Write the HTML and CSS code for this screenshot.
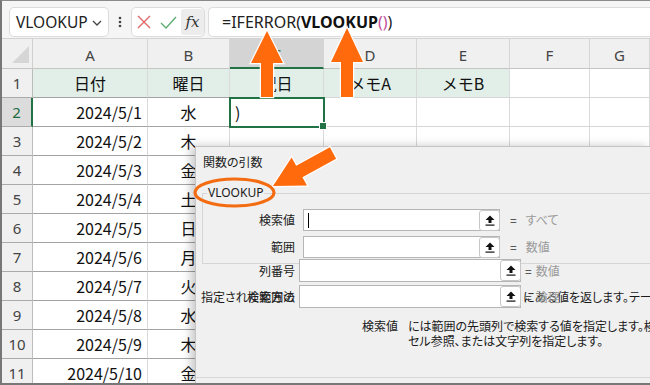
FILE: index.html
```html
<!DOCTYPE html>
<html lang="ja">
<head>
<meta charset="utf-8">
<title>VLOOKUP</title>
<link rel="stylesheet" href="styles.css">
</head>
<body>
<div class="app">
  <div class="toolbar">
    <div class="namebox"><span>VLOOKUP</span>
      <svg class="chev" width="10" height="6" viewBox="0 0 10 6"><path d="M1 1 L5 5 L9 1" fill="none" stroke="#444" stroke-width="1.3"/></svg>
    </div>
    <div class="dots"><svg width="4" height="12" viewBox="0 0 4 12"><circle cx="2" cy="2" r="1.3" fill="#444"/><circle cx="2" cy="6" r="1.3" fill="#444"/><circle cx="2" cy="10" r="1.3" fill="#444"/></svg></div>
    <div class="edit">
      <svg class="ico-x" width="14" height="14" viewBox="0 0 14 14"><path d="M1 1 L13 13 M13 1 L1 13" stroke="#e06868" stroke-width="1.4" fill="none"/></svg>
      <svg class="ico-ok" width="17" height="13" viewBox="0 0 17 13"><path d="M1 7 L6 12 L16 1" stroke="#5fae73" stroke-width="1.4" fill="none"/></svg>
      <span class="fx">fx</span>
    </div>
    <div class="formula">=IFERROR(<b>VLOOKUP</b><span class="pr">()</span>)</div>
  </div>

  <div class="sheet">
    <div class="corner"><span class="tri"></span></div>
    <div class="ch">A</div><div class="ch">B</div><div class="ch sel">C</div><div class="ch">D</div><div class="ch">E</div><div class="ch">F</div><div class="ch">G</div>

    <div class="rh">1</div>
    <div class="c hd t">日付</div><div class="c hd t">曜日</div><div class="c hd">祝日</div><div class="c hd">メモA</div><div class="c hd">メモB</div><div class="c"></div><div class="c"></div>

    <div class="rh act">2</div>
    <div class="c dt t">2024/5/1</div><div class="c wd t">水</div><div class="c active">)</div><div class="c"></div><div class="c"></div><div class="c"></div><div class="c"></div>

    <div class="rh">3</div>
    <div class="c dt t">2024/5/2</div><div class="c wd t">木</div><div class="c"></div><div class="c"></div><div class="c"></div><div class="c"></div><div class="c"></div>

    <div class="rh">4</div>
    <div class="c dt t">2024/5/3</div><div class="c wd t">金</div><div class="c"></div><div class="c"></div><div class="c"></div><div class="c"></div><div class="c"></div>

    <div class="rh">5</div>
    <div class="c dt t">2024/5/4</div><div class="c wd t">土</div><div class="c"></div><div class="c"></div><div class="c"></div><div class="c"></div><div class="c"></div>

    <div class="rh">6</div>
    <div class="c dt t">2024/5/5</div><div class="c wd t">日</div><div class="c"></div><div class="c"></div><div class="c"></div><div class="c"></div><div class="c"></div>

    <div class="rh">7</div>
    <div class="c dt t">2024/5/6</div><div class="c wd t">月</div><div class="c"></div><div class="c"></div><div class="c"></div><div class="c"></div><div class="c"></div>

    <div class="rh">8</div>
    <div class="c dt t">2024/5/7</div><div class="c wd t">火</div><div class="c"></div><div class="c"></div><div class="c"></div><div class="c"></div><div class="c"></div>

    <div class="rh">9</div>
    <div class="c dt t">2024/5/8</div><div class="c wd t">水</div><div class="c"></div><div class="c"></div><div class="c"></div><div class="c"></div><div class="c"></div>

    <div class="rh">10</div>
    <div class="c dt t">2024/5/9</div><div class="c wd t">木</div><div class="c"></div><div class="c"></div><div class="c"></div><div class="c"></div><div class="c"></div>

    <div class="rh">11</div>
    <div class="c dt t">2024/5/10</div><div class="c wd t">金</div><div class="c"></div><div class="c"></div><div class="c"></div><div class="c"></div><div class="c"></div>
  </div>

  <div class="dialog">
    <div class="dlg-title">関数の引数</div>
    <fieldset class="args">
      <legend>VLOOKUP</legend>
      <div class="argrow">
        <span class="lbl">検索値</span>
        <div class="field"><span class="caret"></span>
          <span class="pick"><svg width="10" height="11" viewBox="0 0 10 11"><path d="M5 0.5 L9.5 5 L6.5 5 L6.5 8 L3.5 8 L3.5 5 L0.5 5 Z" fill="#111"/><rect x="0.5" y="9.5" width="9" height="1.2" fill="#111"/></svg></span>
        </div>
        <span class="res"><i>=</i>すべて</span>

        <span class="lbl">範囲</span>
        <div class="field"><span></span>
          <span class="pick"><svg width="10" height="11" viewBox="0 0 10 11"><path d="M5 0.5 L9.5 5 L6.5 5 L6.5 8 L3.5 8 L3.5 5 L0.5 5 Z" fill="#111"/><rect x="0.5" y="9.5" width="9" height="1.2" fill="#111"/></svg></span>
        </div>
        <span class="res"><i>=</i>数値</span>
      </div>
    </fieldset>

    <div class="row3">
      <span class="lbl">列番号</span>
      <div class="field wide"><span></span>
        <span class="pick"><svg width="10" height="11" viewBox="0 0 10 11"><path d="M5 0.5 L9.5 5 L6.5 5 L6.5 8 L3.5 8 L3.5 5 L0.5 5 Z" fill="#111"/><rect x="0.5" y="9.5" width="9" height="1.2" fill="#111"/></svg></span>
      </div>
      <span class="res tight"><i>=</i>数値</span>
    </div>

    <div class="row4">
      <span class="lbl-a">指定された範囲の</span>
      <span class="lbl-b">検索方法</span>
      <div class="field wide"><span></span>
        <span class="pick"><svg width="10" height="11" viewBox="0 0 10 11"><path d="M5 0.5 L9.5 5 L6.5 5 L6.5 8 L3.5 8 L3.5 5 L0.5 5 Z" fill="#111"/><rect x="0.5" y="9.5" width="9" height="1.2" fill="#111"/></svg></span>
      </div>
      <span class="under">にある値を返します。テーブルは</span>
      <span class="res tight over"><i>=</i>論理</span>
    </div>

    <div class="desc">
      <span class="dlbl">検索値</span>
      <div class="dtext">
        <div>には範囲の先頭列で検索する値を指定します。検索値には値、</div>
        <div>セル参照、または文字列を指定します。</div>
      </div>
    </div>

    <div class="sep"></div>
  </div>

  <svg class="overlay" width="650" height="385" viewBox="0 0 650 385">
    <g fill="#ff6a0c" stroke="#ffffff" stroke-width="2.5" stroke-linejoin="miter" paint-order="stroke">
      <polygon points="267,31 283,63 273,63 273,97 261,97 261,63 251,63"/>
      <polygon points="347,28 363,62 353,62 353,97 341,97 341,62 331,62"/>
      <polygon points="273,186 307,185.5 302.4,177.2 336.1,158.7 329.9,147.3 296.2,165.8 291.6,157.5"/>
    </g>
    <ellipse cx="234.5" cy="192.5" rx="39.5" ry="13.5" fill="none" stroke="#f36c12" stroke-width="3.2"/>
  </svg>
</div>
</body>
</html>
```

FILE: styles.css
```css
* { box-sizing: border-box; }

html, body {
  margin: 0;
  padding: 0;
}

body {
  width: 650px;
  height: 385px;
  overflow: hidden;
  background: #ffffff;
  font-family: "Noto Sans", "Noto Sans CJK JP", sans-serif;
}

.app {
  position: relative;
  width: 650px;
  height: 385px;
  border-top: 1px solid #8a8a8a;
  border-left: 2px solid #777777;
  border-bottom: 2px solid #777777;
  overflow: hidden;
  background: #ffffff;
}

/* ---------- toolbar ---------- */
.toolbar {
  height: 38px;
  background: #f5f5f5;
  border-bottom: 1px solid #d3d3d3;
  display: flex;
  align-items: flex-start;
  padding: 6px 0 0 7px;
}

.namebox {
  width: 100px;
  height: 30px;
  background: #ffffff;
  border: 1px solid #dcdcdc;
  border-radius: 5px;
  display: flex;
  align-items: center;
  justify-content: space-between;
  padding: 0 6px 0 6px;
  font-size: 15.5px;
  color: #222222;
}

.chev { margin-top: 1px; }

.dots {
  width: 22px;
  height: 30px;
  display: flex;
  align-items: center;
  justify-content: center;
}

.edit {
  width: 74px;
  height: 30px;
  background: #ffffff;
  border: 1px solid #dcdcdc;
  border-radius: 5px;
  display: flex;
  align-items: center;
  padding-left: 5px;
}

.ico-x { margin-right: 9px; }
.ico-ok { margin-right: 4px; }

.fx {
  width: 23px;
  height: 26px;
  background: #ececec;
  border-radius: 3px;
  display: flex;
  align-items: center;
  justify-content: center;
  font-family: "DejaVu Serif", "Liberation Serif", serif;
  font-style: italic;
  font-size: 15px;
  color: #333333;
}

.formula {
  flex: 1;
  margin-left: 3px;
  height: 30px;
  background: #ffffff;
  border: 1px solid #dcdcdc;
  border-right: none;
  border-radius: 5px 0 0 5px;
  padding-left: 13px;
  font-size: 16px;
  line-height: 28px;
  color: #222222;
  white-space: nowrap;
}

.formula b { font-weight: 700; color: #111111; }
.formula .pr { color: #c2509a; }

/* ---------- sheet ---------- */
.sheet {
  display: grid;
  grid-template-columns: 31px 115px 82px 94px 93px 93px 80px 1fr;
  grid-template-rows: 30px repeat(11, 29px);
  font-family: "Noto Sans CJK JP", "Noto Sans", sans-serif;
}

.corner {
  background: #f0f0f0;
  border-right: 1px solid #d0d0d0;
  border-bottom: 1px solid #c4c4c4;
  display: flex;
  align-items: flex-end;
  justify-content: flex-end;
  padding: 0 3px 5px 0;
}

.tri {
  width: 0;
  height: 0;
  border-left: 17px solid transparent;
  border-bottom: 17px solid #d6d6d6;
}

.ch {
  background: #f0f0f0;
  border-right: 1px solid #d6d6d6;
  border-bottom: 1px solid #c4c4c4;
  display: flex;
  align-items: center;
  justify-content: center;
  font-family: "Noto Sans", sans-serif;
  font-size: 15px;
  color: #444444;
  padding-top: 2px;
}

.ch.sel {
  background: #d4d4d4;
  border-bottom: 2px solid #217346;
  color: #1f6b42;
}

.rh {
  background: #f0f0f0;
  border-right: 1px solid #bdbdbd;
  border-bottom: 1px solid #ababab;
  display: flex;
  align-items: center;
  justify-content: center;
  font-family: "Noto Sans", sans-serif;
  font-size: 15px;
  color: #444444;
}

.rh.act {
  background: #dcdcdc;
  border-right: 2px solid #217346;
  color: #1f6b42;
}

.c {
  border-right: 1px solid #dadada;
  border-bottom: 1px solid #d6d6d6;
  display: flex;
  align-items: center;
  font-size: 16px;
  color: #111111;
  white-space: nowrap;
}

.c.t { border-bottom-color: #a3a3a3; }

.c.hd {
  background: #e2efe9;
  justify-content: center;
}

.c.dt {
  justify-content: flex-end;
  padding-right: 5px;
}

.c.wd { justify-content: center; }

.c.active {
  position: relative;
  outline: 2px solid #217346;
  outline-offset: -1px;
  padding-left: 5px;
  z-index: 1;
}

.c.active::after {
  content: "";
  position: absolute;
  right: -4px;
  bottom: -4px;
  width: 6px;
  height: 6px;
  background: #217346;
  border: 1px solid #ffffff;
}

/* ---------- dialog ---------- */
.dialog {
  position: absolute;
  left: 193px;
  top: 145px;
  right: 0;
  bottom: 0;
  z-index: 2;
  background: #f0f0f0;
  border-left: 1px solid #c4c4c4;
  border-top: 1px solid #c4c4c4;
  box-shadow: -4px 0 9px rgba(0, 0, 0, 0.22);
  font-family: "Noto Sans CJK JP", sans-serif;
  font-size: 12px;
  line-height: 16px;
  color: #1a1a1a;
  font-feature-settings: "palt";
  display: flex;
  flex-direction: column;
  overflow: hidden;
}

.dlg-title {
  padding: 7px 0 0 7px;
  height: 23px;
}

.args {
  margin: 15px -40px 0 6px;
  padding: 8px 0 5px 0;
  border: 1px solid #d6d6d6;
  min-width: 0;
}

.args legend {
  margin-left: 4px;
  padding: 0 1px;
  line-height: 16px;
  font-family: "Noto Sans", "Noto Sans CJK JP", sans-serif;
  font-size: 12px;
  color: #1a1a1a;
}

.argrow {
  display: grid;
  grid-template-columns: 92px 197px auto;
  grid-auto-rows: 22px;
  column-gap: 8px;
  row-gap: 5px;
  align-items: center;
}

.lbl {
  text-align: right;
  white-space: nowrap;
}

.field {
  height: 100%;
  background: #ffffff;
  border: 1px solid #b5b5b5;
  display: flex;
  align-items: center;
  justify-content: space-between;
  padding-right: 0;
}

.caret {
  width: 1px;
  height: 15px;
  background: #000000;
  margin-left: 4px;
}

.pick {
  width: 21px;
  height: 21px;
  background: #ffffff;
  border: 1px solid #c6c6c6;
  border-radius: 3px;
  display: flex;
  align-items: center;
  justify-content: center;
  margin-right: -1px;
}

.res {
  margin-left: 2px;
  color: #9a9a9a;
  white-space: nowrap;
}

.res i {
  font-style: normal;
  color: #333333;
  margin-right: 9px;
}

.res.tight { margin-left: 0; }
.res.tight i { margin-right: 4px; }

.row3, .row4 {
  display: grid;
  grid-template-columns: 99px 222px auto;
  grid-template-rows: 23px;
  column-gap: 4px;
  align-items: center;
}

.row3 { margin-top: -5px; }
.row4 { margin-top: 3px; }

.row3 .lbl { grid-column: 1; }

.row4 .lbl-a {
  grid-area: 1 / 1;
  white-space: nowrap;
  padding-left: 5px;
}

.row4 .lbl-b {
  grid-area: 1 / 1;
  text-align: right;
  white-space: nowrap;
}

.row4 .field { grid-area: 1 / 2; }

.row4 .under {
  grid-area: 1 / 3;
  margin-left: -2px;
  white-space: nowrap;
  color: #1a1a1a;
}

.row4 .over {
  grid-area: 1 / 3;
}

.desc {
  margin-top: 10px;
  display: grid;
  grid-template-columns: 202px 1fr;
  column-gap: 10px;
  line-height: 15px;
}

.dlbl { text-align: right; }

.dtext div { white-space: nowrap; }

.sep {
  margin-top: auto;
  height: 6px;
  border-top: 1px solid #d8d8d8;
}

/* ---------- overlay annotations ---------- */
.overlay {
  position: absolute;
  left: -2px;
  top: -1px;
  z-index: 5;
  pointer-events: none;
}
```
